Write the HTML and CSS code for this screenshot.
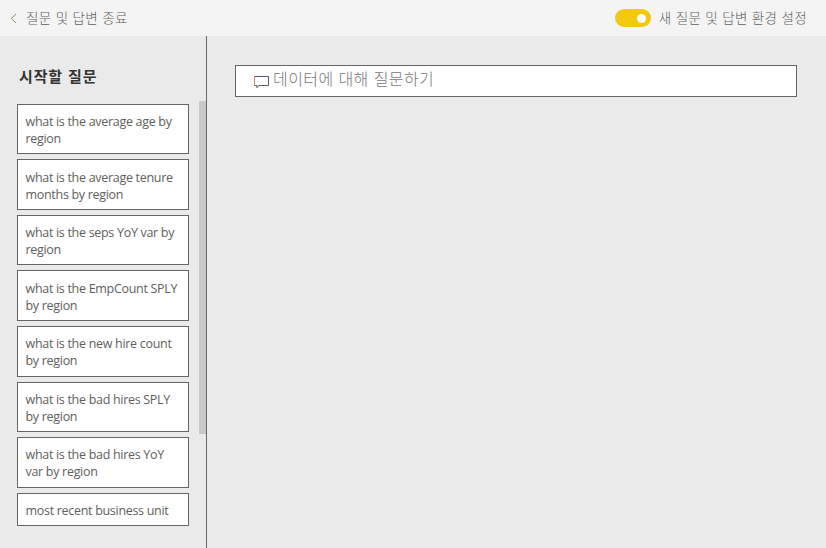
FILE: index.html
```html
<!DOCTYPE html>
<html lang="ko">
<head>
<meta charset="utf-8">
<title>질문 및 답변</title>
<link rel="stylesheet" href="styles.css">
</head>
<body>
<header class="topbar">
  <button class="back">
    <svg class="chevron" width="7" height="11" viewBox="0 0 7 11"><path d="M6 1 1.3 5.5 6 10"/></svg>
    <span>질문 및 답변 종료</span>
  </button>
  <div class="setting">
    <span class="toggle"><span class="knob"></span></span>
    <span>새 질문 및 답변 환경 설정</span>
  </div>
</header>
<div class="content">
  <aside class="sidebar">
    <div class="starters">
      <h2>시작할 질문</h2>
      <ul>
        <li>what is the average age by<br>region</li>
        <li>what is the average tenure<br>months by region</li>
        <li>what is the seps YoY var by<br>region</li>
        <li>what is the EmpCount SPLY<br>by region</li>
        <li>what is the new hire count<br>by region</li>
        <li>what is the bad hires SPLY<br>by region</li>
        <li>what is the bad hires YoY<br>var by region</li>
        <li>most recent business unit</li>
      </ul>
    </div>
    <div class="scroll-thumb"></div>
  </aside>
  <main>
    <div class="ask">
      <svg class="bubble" width="16" height="14" viewBox="0 0 16 14"><path class="frame" d="M.5 1.5H14.500V10.500H5L2.800 12.700V10.500H.5"/><path class="edge" d="M.5 1V11"/></svg>
      <span>데이터에 대해 질문하기</span>
    </div>
  </main>
</div>
</body>
</html>
```

FILE: styles.css
```css
* { box-sizing: border-box; }
body {
  margin: 0;
  height: 548px;
  overflow: hidden;
  display: flex;
  flex-direction: column;
  background: #eaeaea;
  color: #605e5c;
  font-family: "Open Sans", "Noto Sans CJK KR", sans-serif;
  font-size: 12.5px;
}
.topbar {
  height: 36px;
  flex: none;
  display: flex;
  justify-content: space-between;
  align-items: center;
  padding: 0 19px 0 10px;
  background: #f4f4f4;
  font-family: "Noto Sans CJK KR", sans-serif;
  font-size: 13.5px;
  font-weight: 300;
  letter-spacing: 0.34px;
}
.topbar span { position: relative; top: -1px; }
.back {
  display: flex;
  align-items: center;
  gap: 9px;
  padding: 0;
  border: 0;
  background: none;
  font: inherit;
  letter-spacing: inherit;
  color: inherit;
}
.chevron { fill: none; stroke: #a08c6c; stroke-width: 1; }
.setting { display: flex; align-items: center; gap: 8px; }
.topbar .toggle {
  top: 0;
  display: flex;
  align-items: center;
  justify-content: flex-end;
  width: 36px;
  height: 18px;
  padding-right: 5px;
  border-radius: 9px;
  background: #f2c811;
}
.topbar .knob { top: 0; width: 9px; height: 9px; border-radius: 50%; background: #fff; }
.content { flex: 1; display: flex; min-height: 0; }
.sidebar {
  width: 207px;
  display: flex;
  justify-content: space-between;
  border-right: 1px solid #666;
}
.starters { width: 189px; padding: 29px 0 0 17px; }
h2 {
  margin: 0 0 16.75px 2px;
  font: 700 15px/22px "Noto Sans CJK KR", sans-serif;
  letter-spacing: 0.85px;
  color: #333;
}
ul {
  list-style: none;
  margin: 0;
  padding: 0;
  display: flex;
  flex-direction: column;
  gap: 5.05px;
}
li {
  height: 50.52px;
  flex: none;
  padding: 8.3px 0 0 7.5px;
  border: 1px solid #666;
  background: #fff;
  line-height: 17px;
  letter-spacing: -0.3px;
  white-space: nowrap;
}
li:last-child { height: 33px; }
.scroll-thumb { width: 7px; height: 333px; margin-top: 65px; background: #c8c8c8; }
main { flex: 1; padding: 29px 29px 0 28px; }
.ask {
  display: flex;
  height: 32px;
  padding-left: 17px;
  border: 1px solid #666;
  background: #fff;
  font: 300 16px/25px "Noto Sans CJK KR", sans-serif;
  letter-spacing: 0.42px;
  color: #777;
}
.bubble { margin: 9px 3px 0 1px; fill: none; stroke-width: 1; }
.frame { stroke: #54586a; }
.edge { stroke: #c08a6c; }
```
